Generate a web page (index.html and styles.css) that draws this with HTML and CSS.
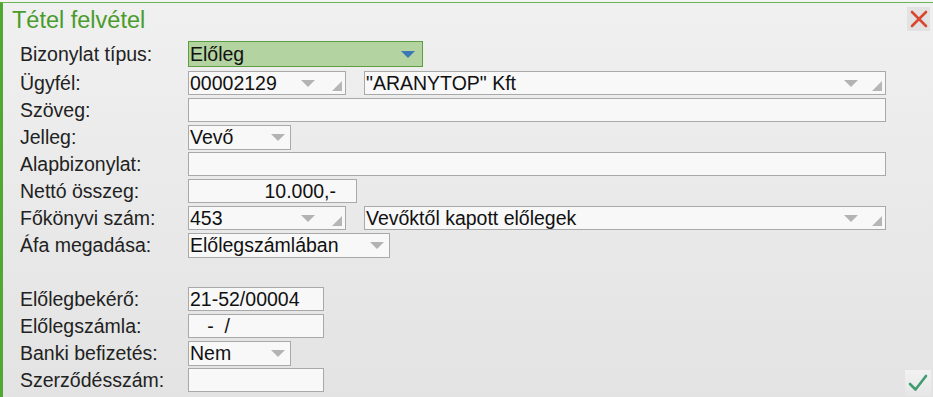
FILE: index.html
```html
<!DOCTYPE html>
<html lang="hu">
<head>
<meta charset="utf-8">
<title>Tétel felvétel</title>
<link rel="stylesheet" href="styles.css">
</head>
<body>
<div class="dialog">
  <div class="header">
    <div class="title">Tétel felvétel</div>
    <div class="close"><svg width="20" height="20" viewBox="0 0 20 20"><path d="M3 3 L17 17 M17 3 L3 17" stroke="#d8472f" stroke-width="2.6" stroke-linecap="round"/></svg></div>
  </div>
  <div class="form">
    <div class="row first">
      <div class="label">Bizonylat típus:</div>
      <div class="fields"><div class="inp green w235"><span class="val">Előleg</span><span class="arrow blue"></span></div></div>
    </div>
    <div class="row">
      <div class="label">Ügyfél:</div>
      <div class="fields">
        <div class="inp w158"><span class="val">00002129</span><span class="arrow"></span><span class="corner"></span></div>
        <div class="inp wname"><span class="val">"ARANYTOP" Kft</span><span class="arrow"></span><span class="corner"></span></div>
      </div>
    </div>
    <div class="row">
      <div class="label">Szöveg:</div>
      <div class="fields"><div class="inp wfull"><span class="val"></span></div></div>
    </div>
    <div class="row">
      <div class="label">Jelleg:</div>
      <div class="fields"><div class="inp w103 tall"><span class="val">Vevő</span><span class="arrow"></span></div></div>
    </div>
    <div class="row">
      <div class="label">Alapbizonylat:</div>
      <div class="fields"><div class="inp wfull"><span class="val"></span></div></div>
    </div>
    <div class="row">
      <div class="label">Nettó összeg:</div>
      <div class="fields"><div class="inp w169"><span class="val right">10.000,-</span></div></div>
    </div>
    <div class="row">
      <div class="label">Főkönyvi szám:</div>
      <div class="fields">
        <div class="inp w158"><span class="val">453</span><span class="arrow"></span><span class="corner"></span></div>
        <div class="inp wname"><span class="val">Vevőktől kapott előlegek</span><span class="arrow"></span><span class="corner"></span></div>
      </div>
    </div>
    <div class="row">
      <div class="label">Áfa megadása:</div>
      <div class="fields"><div class="inp w202 tall"><span class="val">Előlegszámlában</span><span class="arrow"></span></div></div>
    </div>
    <div class="row spacer"></div>
    <div class="row">
      <div class="label">Előlegbekérő:</div>
      <div class="fields"><div class="inp w136"><span class="val">21-52/00004</span></div></div>
    </div>
    <div class="row">
      <div class="label">Előlegszámla:</div>
      <div class="fields"><div class="inp w136"><span class="val pre">   -  /</span></div></div>
    </div>
    <div class="row">
      <div class="label">Banki befizetés:</div>
      <div class="fields"><div class="inp w103 tall"><span class="val">Nem</span><span class="arrow"></span></div></div>
    </div>
    <div class="row">
      <div class="label">Szerződésszám:</div>
      <div class="fields"><div class="inp w136"><span class="val"></span></div></div>
    </div>
  </div>
  <div class="ok"><svg width="22" height="20" viewBox="0 0 22 20"><path d="M3 11 L8.5 16.5 L19 3" fill="none" stroke="#3d9c70" stroke-width="2.6" stroke-linecap="round" stroke-linejoin="round"/></svg></div>
</div>
</body>
</html>
```

FILE: styles.css
```css
html, body {
  margin: 0;
  padding: 0;
}
body {
  width: 933px;
  height: 397px;
  overflow: hidden;
  font-family: "Liberation Sans", Arial, sans-serif;
  background: #f4f4f4;
}
.dialog {
  position: relative;
  box-sizing: border-box;
  height: 397px;
  margin-top: 2px;
  border-top: 1px solid #6cb450;
  border-left: 3px solid #4fa834;
  background: linear-gradient(#f0f0f0, #e3e3e3);
}
.header {
  display: flex;
  justify-content: space-between;
  align-items: flex-start;
  height: 36px;
}
.title {
  padding-left: 9px;
  padding-top: 4px;
  font-size: 23.5px;
  line-height: 27px;
  color: #4a9c2c;
}
.close {
  margin-top: 4px;
  margin-right: 3px;
  width: 23px;
  height: 24px;
  background: #e2e2e2;
  display: flex;
  align-items: center;
  justify-content: center;
}
.form {
  padding-left: 17px;
  padding-top: 3px;
}
.row {
  display: grid;
  grid-template-columns: 168px 1fr;
  height: 27px;
}
.row.first {
  height: 29px;
}
.row.spacer {
  height: 27px;
}
.label {
  font-size: 19.5px;
  line-height: 25px;
  color: #222;
}
.fields {
  display: flex;
  gap: 18px;
}
.inp {
  box-sizing: border-box;
  height: 24px;
  border: 1px solid #a9a9a9;
  background: #f8f8f8;
  display: flex;
  align-items: center;
  font-size: 19.5px;
  color: #111;
}
.inp.tall {
  height: 25px;
}
.inp.green {
  height: 26px;
  margin-top: -1px;
  background: #b3d3a1;
  border-color: #5e9e42;
}
.val {
  flex: 1;
  padding-left: 1px;
  line-height: 23px;
  white-space: nowrap;
  overflow: hidden;
}
.val.right {
  text-align: right;
  padding-right: 20px;
}
.val.pre {
  white-space: pre;
  padding-left: 2px;
}
.arrow {
  width: 0;
  height: 0;
  border-left: 7px solid transparent;
  border-right: 7px solid transparent;
  border-top: 7px solid #b3b3b3;
  margin-right: 5px;
}
.arrow.blue {
  border-top-color: #3d78b6;
  margin-right: 7px;
}
.corner {
  align-self: flex-end;
  width: 0;
  height: 0;
  border-left: 10px solid transparent;
  border-bottom: 10px solid #b6b6b6;
  margin-left: 12px;
  margin-right: 3px;
  margin-bottom: 3px;
}
.w235 { width: 235px; }
.w158 { width: 158px; }
.wname { width: 522px; }
.wname .arrow { margin-right: 0; }
.wname .corner { margin-left: 14px; }
.wfull { width: 698px; }
.w103 { width: 103px; }
.w169 { width: 169px; }
.w202 { width: 202px; }
.w136 { width: 136px; }
.ok {
  position: absolute;
  right: 2px;
  bottom: 3px;
  width: 26px;
  height: 26px;
  background: linear-gradient(#f2f2f2, #e6e6e6);
  display: flex;
  align-items: center;
  justify-content: center;
}
```
